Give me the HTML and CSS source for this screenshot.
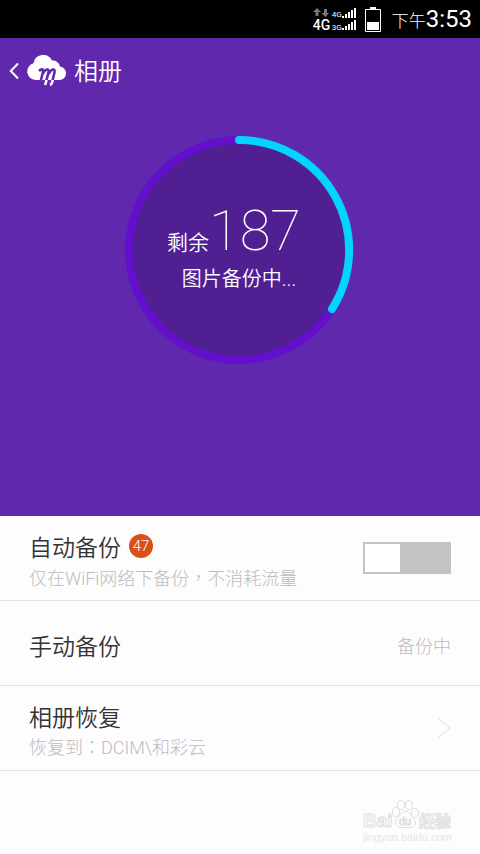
FILE: index.html
```html
<!DOCTYPE html>
<html lang="zh-CN">
<head>
<meta charset="utf-8">
<meta name="viewport" content="width=device-width, initial-scale=1">
<title>相册</title>
<link rel="stylesheet" href="styles.css">
</head>
<body>
<div class="status">
  <div class="network">
    <svg class="arrows" viewBox="0 0 16 9" aria-hidden="true"><path d="M4 0l4 4H5.500v4h-3V4H0zM12.500 9l-4-4H11V1h3v4h2z"/></svg>
    <span class="tiny">4G</span>
    <svg class="bars" viewBox="0 0 14 10" aria-hidden="true"><path d="M0 8h2v2H0zM3 6h2v4H3zM6 4h2v6H6zM9 2h2v8H9zM12 0h2v10h-2z"/></svg>
    <span class="main-net">4G</span>
    <span class="tiny">3G</span>
    <svg class="bars" viewBox="0 0 14 10" aria-hidden="true"><path d="M0 8h2v2H0zM3 6h2v4H3zM6 4h2v6H6zM9 2h2v8H9zM12 0h2v10h-2z"/></svg>
  </div>
  <svg class="battery" viewBox="0 0 16 25" aria-hidden="true"><path d="M5 0h6v2H5z" fill="#fff"/><path d="M.5 2.500h15v22H.5z" fill="none" stroke="#fff"/><path d="M2 15h12v8H2z" fill="#fff"/></svg>
  <div class="clock"><span class="period">下午</span><time>3:53</time></div>
</div>
<main>
  <section class="hero">
    <header class="bar">
      <a class="back" href="#" aria-label="返回">
        <svg viewBox="0 0 10 18"><path d="M9 1.500L1.800 9 9 16.500" fill="none" stroke="#fff" stroke-width="2"/></svg>
      </a>
      <svg class="logo" viewBox="0 0 40 32" aria-hidden="true">
        <defs>
          <clipPath id="upper"><path d="M0 0h40v25H0z"/></clipPath>
          <clipPath id="lower"><path d="M0 25h40v7H0z"/></clipPath>
          <path id="swash" d="M12 16q2-2 3.500-1.500 1 .5.200 3.500L14 25M15.500 19q3-5 5.200-4.500 1.500.5.500 4l-3 11.500M21.500 19q3-5 5.200-4.500 1.500.5.500 4l-2 8.500q-.6 2.300-2.200 3" fill="none" stroke-width="2.600"/>
        </defs>
        <path d="M8.500 25A8.500 8.500 0 0 1 6.500 8.300 9.800 9.800 0 0 1 25 5.500 7.200 7.200 0 0 1 33 11.500 6.800 6.800 0 0 1 33.200 25z" fill="#fff"/>
        <use href="#swash" stroke="#6028ad" clip-path="url(#upper)"/>
        <use href="#swash" stroke="#fff" clip-path="url(#lower)"/>
      </svg>
      <h1>相册</h1>
    </header>
    <div class="progress">
      <svg class="ring" viewBox="0 0 230 230" aria-hidden="true">
        <circle cx="114" cy="115" r="110" fill="#502093" stroke="#640fcb" stroke-width="8"/>
        <path d="M114 5A110 110 0 0 1 207 174" fill="none" stroke="#02d5fb" stroke-width="8" stroke-linecap="round"/>
      </svg>
      <div class="readout">
        <p class="remaining">剩余<strong>187</strong></p>
        <p class="state">图片备份中...</p>
      </div>
    </div>
  </section>
  <ul class="options">
    <li class="row">
      <div class="text">
        <label class="name" for="auto">自动备份<span class="badge">47</span></label>
        <p class="hint">仅在WiFi网络下备份<span class="mid" lang="zh-TW">，</span>不消耗流量</p>
      </div>
      <input class="switch" type="checkbox" role="switch" id="auto">
    </li>
    <li class="row">
      <span class="name">手动备份</span>
      <span class="hint">备份中</span>
    </li>
    <li>
      <a class="row" href="#">
        <span class="text">
          <span class="name">相册恢复</span>
          <span class="hint">恢复到<span class="mid" lang="zh-TW">：</span>DCIM\和彩云</span>
        </span>
        <svg class="chevron" viewBox="0 0 14 22" aria-hidden="true"><path d="M1 1l12 10L1 21" fill="none" stroke="#dcdadd"/></svg>
      </a>
    </li>
  </ul>
</main>
<footer class="credit">
  <svg viewBox="0 0 92 46" role="img" aria-label="Baidu 经验">
    <g class="outline">
      <ellipse cx="35" cy="13" rx="3.500" ry="4.500"/><ellipse cx="40" cy="6" rx="3.500" ry="4.500"/><ellipse cx="48" cy="6" rx="3.500" ry="4.500"/><ellipse cx="54" cy="14" rx="3.500" ry="4.500"/>
      <path d="M44.500 12c4 0 5 4 8 7 4 4 2 9.500-3 9.500h-10c-5 0-7-5.500-3-9.500 3-3 4-7 8-7z"/>
      <text class="brand" x="2" y="28">Bai</text>
      <text class="du" x="38" y="26">du</text>
      <text class="exp" x="58" y="28">经验</text>
    </g>
    <text class="site" x="2" y="42">jingyan.baidu.com</text>
  </svg>
</footer>
</body>
</html>
```
FILE: styles.css
```css
* { box-sizing: border-box; }
body {
  margin: 0;
  min-height: 100vh;
  display: flex;
  flex-direction: column;
  background: #fdfdfd;
  color: #343236;
  font-family: Roboto, "Noto Sans CJK SC", sans-serif;
  font-weight: 350;
}
h1, p, ul { margin: 0; padding: 0; font-weight: inherit; }
ul { list-style: none; }
a { color: inherit; text-decoration: none; }
svg { display: block; flex: none; }

.status {
  height: 38px;
  display: flex;
  justify-content: flex-end;
  align-items: center;
  padding-right: 8px;
  background: #000;
  color: #fff;
}
.network {
  display: grid;
  grid-template-columns: 19px 10px 14px;
  grid-template-rows: 12px 13px;
  align-items: center;
  margin-right: 9px;
}
.arrows { width: 16px; height: 9px; fill: #777; }
.tiny { font-size: 8px; line-height: 8px; align-self: end; font-weight: 400; }
.bars { width: 14px; height: 10px; fill: #fff; }
.main-net { font-size: 14px; line-height: 14px; font-weight: 500; }
.battery { width: 16px; height: 25px; margin-right: 11px; }
.clock { display: flex; align-items: baseline; line-height: 38px; padding-top: 2px; }
.period { font-size: 17px; font-weight: 300; }
time { font-size: 24px; font-weight: 400; }

.hero { background: #6028ad; color: #fff; padding-bottom: 151px; }
.bar { display: flex; align-items: center; height: 66px; padding-left: 9px; }
.back svg { width: 10px; height: 18px; }
.logo { width: 40px; height: 32px; margin: 0 7px 0 8px; }
h1 { font-size: 24px; line-height: 34px; padding-top: 2px; }
.progress { display: grid; justify-content: center; padding-top: 31px; }
.progress > * { grid-area: 1 / 1; }
.ring { width: 230px; height: 230px; }
.readout { text-align: center; padding-top: 70px; }
.remaining { font-size: 21px; line-height: 52px; padding-right: 12px; }
.remaining strong { font-size: 56px; font-weight: 100; }
.state { font-size: 20px; line-height: 20px; padding-right: 2px; }

.row {
  display: flex;
  align-items: center;
  justify-content: space-between;
  height: 85px;
  padding: 8px 29px 0;
  border-bottom: 1px solid #e2e1e3;
}
.text { display: grid; }
.name { display: flex; align-items: center; font-size: 23px; line-height: 28px; padding-top: 2px; }
.hint { font-size: 18px; line-height: 26px; font-weight: 300; color: #bdbbc0; }
.mid { font-family: "Noto Sans CJK TC", sans-serif; }
.badge {
  width: 24px;
  height: 24px;
  margin: 0 0 6px 8px;
  border-radius: 50%;
  background: #db4f1b;
  color: #fff;
  font-size: 15px;
  line-height: 24px;
  text-align: center;
}
.switch {
  appearance: none;
  width: 88px;
  height: 32px;
  margin: 0 0 8px;
  border: 2px solid #c4c2c5;
  background: linear-gradient(90deg, #fff 35px, #c4c2c5 35px);
}
.switch:checked { background: linear-gradient(270deg, #fff 35px, #02d5fb 35px); }
.chevron { width: 14px; height: 22px; margin-bottom: 8px; }

.credit { display: flex; justify-content: flex-end; margin-top: auto; padding: 0 27px 9px; }
.credit svg { width: 92px; height: 46px; }
.outline { fill: #fdfdfd; stroke: #dfdfdf; stroke-width: 1; }
.brand { font: bold 19px "Liberation Sans", sans-serif; }
.du { font: 11px "Liberation Sans", sans-serif; }
.exp { font: bold 16px "Noto Sans CJK SC", sans-serif; }
.site { font: 11px "Liberation Sans", sans-serif; fill: #e6e6e6; }
```
